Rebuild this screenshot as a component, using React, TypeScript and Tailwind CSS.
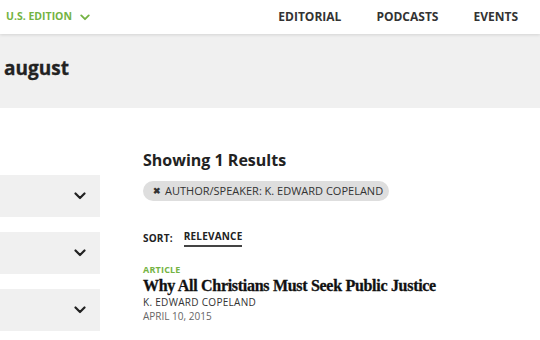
import React from "react";

const sans = "font-['Open_Sans','Liberation_Sans',sans-serif]";

function Chevron({className}: {className?: string}) {
    return (
        <svg viewBox="0 0 12 8" className={className} fill="none" stroke="currentColor" strokeWidth={2.2}
             strokeLinecap="round" strokeLinejoin="round">
            <path d="M1.5 1.5 6 6l4.5-4.5"/>
        </svg>
    );
}

function FilterBox() {
    return (
        <div className="h-[42px] bg-[#f0f0f0] flex items-center justify-end pr-[14px]">
            <Chevron className="w-[12px] h-[8px] text-[#222]"/>
        </div>
    );
}

export default function App() {
    return (
        <div className={`w-[540px] h-[340px] overflow-hidden bg-white ${sans}`}>
            {/* top bar */}
            <header className="relative z-10 h-[34px] bg-white shadow-[0_1px_3px_rgba(0,0,0,0.12)] flex items-center">
                <div className="flex items-center pl-[6px] text-[#74b343] text-[10.5px] font-bold">
                    U.S. EDITION
                    <Chevron className="ml-[8px] w-[10px] h-[7px]"/>
                </div>
                <nav className="ml-auto flex items-center gap-[35px] pr-[22px] text-[12px] font-bold text-[#333]">
                    <span>EDITORIAL</span>
                    <span>PODCASTS</span>
                    <span>EVENTS</span>
                </nav>
            </header>

            {/* banner */}
            <div className="h-[74px] bg-[#f0f0f0] flex items-center pl-[4px]">
                <h1 className="text-[19px] font-bold text-[#222] leading-none -mt-[6px] [-webkit-text-stroke:0.3px_#222]">august</h1>
            </div>

            <div className="flex">
                <aside className="w-[100px] pt-[67px] flex flex-col gap-[15px]">
                    <FilterBox/>
                    <FilterBox/>
                    <FilterBox/>
                </aside>

                <main className="ml-[43px] pt-[41px]">
                    <h2 className="text-[16px] font-bold text-[#222] leading-[22px]">Showing 1 Results</h2>
                    <div className="mt-[10px] inline-flex items-center h-[20px] pl-[10px] pr-[6px] rounded-full bg-[#dedede] text-[11px] text-[#333]">
                        <span className="font-bold mr-[4px] text-[9px]">✖</span>
                        AUTHOR/SPEAKER: K. EDWARD COPELAND
                    </div>
                    <div className="mt-[28px] flex items-center text-[10px] font-bold text-[#222] tracking-[0.2px]">
                        <span>SORT:</span>
                        <span className="ml-[11px] border-b-2 border-[#444] pb-[1px]">RELEVANCE</span>
                    </div>
                    <div className="mt-[17px] text-[9px] font-bold text-[#74b343] leading-[12px] tracking-[0.2px]">ARTICLE</div>
                    <div className="font-['Liberation_Serif',serif] font-bold text-[16px] text-[#111] leading-[20px] tracking-[-0.3px] [-webkit-text-stroke:0.3px_#111]">
                        Why All Christians Must Seek Public Justice
                    </div>
                    <div className="text-[10px] text-[#333] leading-[13px] tracking-[0.3px]">K. EDWARD COPELAND</div>
                    <div className="text-[10px] text-[#666] leading-[15px]">APRIL 10, 2015</div>
                </main>
            </div>
        </div>
    );
}
